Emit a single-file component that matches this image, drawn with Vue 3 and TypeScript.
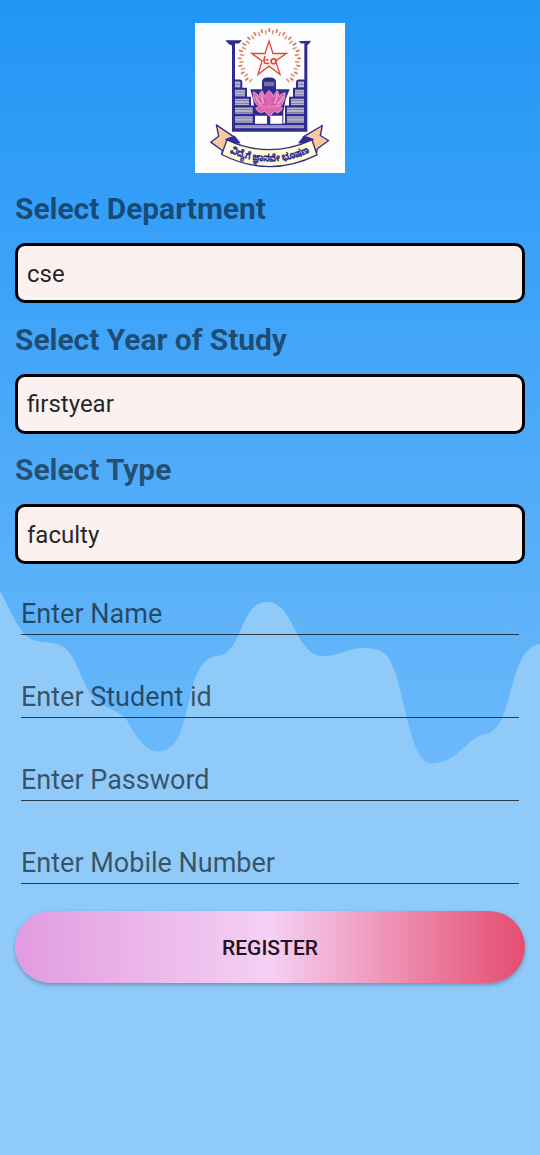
<script setup lang="ts">
import { ref } from 'vue'

interface Choice {
  id: string
  label: string
  value: string
}

interface Entry {
  id: string
  hint: string
  type: string
}

const choices = ref<Choice[]>([
  { id: 'department', label: 'Select Department', value: 'cse' },
  { id: 'year', label: 'Select Year of Study', value: 'firstyear' },
  { id: 'type', label: 'Select Type', value: 'faculty' },
])

const entries: Entry[] = [
  { id: 'name', hint: 'Enter Name', type: 'text' },
  { id: 'student', hint: 'Enter Student id', type: 'text' },
  { id: 'password', hint: 'Enter Password', type: 'password' },
  { id: 'mobile', hint: 'Enter Mobile Number', type: 'tel' },
]

// Rays of the dashed halo around the star, in degrees
const rays: number[] = Array.from({ length: 39 }, (_, i) => -138 + i * (276 / 38))
</script>

<template>
  <main class="page">
    <svg class="wave" viewBox="0 0 540 1155" aria-hidden="true">
      <path
        fill="#90caf9"
        d="M0 591C9 607 17 629 28 637C36 643 47 642 55 643.500C73 647 77 669 88 690C96 705 113 709 122 715C132 723 139 751 158 751.500C177 751 182 730 187 710C192 689 197 657 217 656C244 653 239 602 267 602C295 602 294 656 324 656C339 656 347 648 364 648C374 648 382 650 387 656C405 678 407 763 432 763.500C459 762 467 737 486 734C515 728 507 648 540 644V1155H0Z"
      />
    </svg>

    <svg class="logo" viewBox="15 13.5 450 450" role="img" aria-label="College emblem">
      <rect x="15" y="13" width="451" height="451" fill="#fdfdfd" />
      <g stroke-width="5">
        <g v-for="(a, i) in rays" :key="i" :transform="`translate(238 124) rotate(${a})`">
          <path v-if="i % 2" d="M0-95V-83" stroke="#d8705e" />
          <path v-else d="M0-90V-77" stroke="#e29a7c" />
        </g>
      </g>
      <path
        d="M237 68L249 105H289L257 127L270 168L237 143L204 168L216 127L185 105H225Z"
        fill="#fff8f5" stroke="#dc4a40" stroke-width="4"
      />
      <path d="M225 113q-7 19 2 22h11M227 124h8M251 121c-11 0-10 15 0 15c10 0 9-15 0-15" fill="none" stroke="#df4438" stroke-width="5" />

      <g fill="#b4b5c9" stroke="#302b91" stroke-width="6">
        <path d="M132 186H149Q154 186 154 193V210H132Z" />
        <path d="M132 211H168V237H132Z" />
        <path d="M132 238H180V263H132Z" />
        <path d="M132 264H191V289H132Z" />
        <path d="M132 290H191V316H132Z" />
        <path d="M345 186H326Q321 186 321 193V210H345Z" />
        <path d="M345 211H312V237H345Z" />
        <path d="M345 238H300V263H345Z" />
        <path d="M345 264H288V289H345Z" />
        <path d="M345 290H288V316H345Z" />
        <path d="M132 317H345V332H132Z" />
      </g>
      <path
        d="M134 198H152M134 220H166M134 229H166M134 246H178M134 255H178M134 273H189M134 282H189M134 299H189M134 308H189M134 325H343M324 198H343M315 220H343M315 229H343M303 246H343M303 255H343M290 273H343M290 282H343M290 299H343M290 308H343"
        stroke="#6a679c" stroke-width="2"
      />
      <path d="M106 65H156L147 75H135V331H343V75H334L325 68L363 67Q359 76 352 80V340H126V81Q115 78 106 65Z" fill="#302b91" />
      <path d="M181 212H216V188Q219 177 230 177H244Q257 178 258 190V212H299L287 242L281 275H194L189 242Z" fill="#302b91" />
      <path d="M222 190H253V203H222Z" fill="#77759f" />
      <path d="M192 271H280V316H192Z" fill="#302b91" />
      <path d="M195 292H231V316H195ZM241 292H277V316H241Z" fill="#fff" />
      <g fill="#e069ae" stroke="#f2b4d8" stroke-width="2">
        <path d="M190 220Q203 224 207 237Q207 220 217 217Q222 229 226 235Q227 222 237 216Q248 222 250 235Q254 223 262 216Q268 224 267 235Q271 224 286 222Q286 247 275 260L237 267L200 259Q188 245 190 220Z" />
        <path d="M197 269Q211 257 219 266Q231 257 238 267Q246 257 254 267Q268 257 278 269Q272 281 262 283L253 279L239 294L224 279L214 283Q202 281 197 269Z" />
      </g>
      <path d="M197 234Q204 252 216 257M216 226Q214 244 222 256M261 226Q262 244 253 256M280 234Q272 252 261 257" fill="none" stroke="#f3a9d5" stroke-width="4" />
      <path d="M207 237Q212 252 225 263M226 235Q220 250 231 264M250 235Q254 250 244 264M267 235Q264 252 250 263" fill="none" stroke="#b93f92" stroke-width="2" />

      <g stroke="#302b91" stroke-width="4" stroke-linejoin="round">
        <path d="M79 319L133 356L119 386L96 405L97 396L62 371L86 353Z" fill="#f8c99f" />
        <path d="M397 321L340 355L358 385L379 406L382 391L416 366L391 351Z" fill="#f8c99f" />
        <path d="M108 363L133 354L149 373L121 375ZM369 363L343 354L327 373L354 375Z" fill="#302b91" />
        <path d="M111 364Q237 423 366 364L381 409Q238 480 95 408Z" fill="#fffbd5" />
      </g>
      <path id="motto-curve" d="M111 399Q237 459 367 399" fill="none" />
      <text class="motto">
        <textPath href="#motto-curve" startOffset="50%" text-anchor="middle" textLength="248" lengthAdjust="spacingAndGlyphs">ವಿದ್ಯೆಗೆ ಜ್ಞಾನವೇ ಭೂಷಣ</textPath>
      </text>
    </svg>

    <form class="form" @submit.prevent>
      <div v-for="choice in choices" :key="choice.id" class="choice">
        <label class="label" :for="choice.id">{{ choice.label }}</label>
        <input :id="choice.id" v-model="choice.value" class="select" type="text" readonly />
      </div>
      <div class="entries">
        <input
          v-for="entry in entries"
          :key="entry.id"
          class="entry"
          :type="entry.type"
          :placeholder="entry.hint"
        />
      </div>
      <button class="register" type="submit">REGISTER</button>
    </form>
  </main>
</template>

<style>
body {
  margin: 0;
}
</style>

<style scoped>
.page {
  position: relative;
  box-sizing: border-box;
  width: 540px;
  height: 1155px;
  padding: 22.5px 15px 0;
  overflow: hidden;
  display: flex;
  flex-direction: column;
  align-items: center;
  background: linear-gradient(180deg, #2196f3 0, #359ff8 210px, #59b0f8 570px, #6bb9fb 765px);
  font-family: Roboto, "Noto Sans", sans-serif;
}

.wave {
  position: absolute;
  inset: 0;
  width: 100%;
  height: 100%;
}

.logo {
  position: relative;
  display: block;
  flex: none;
  width: 150px;
  height: 150px;
}

.motto {
  fill: #302b91;
  stroke: #302b91;
  stroke-width: 1px;
  font-family: "Noto Sans Kannada", "Noto Sans", sans-serif;
  font-size: 30px;
  font-weight: 700;
}

.form {
  position: relative;
  width: 100%;
  display: flex;
  flex-direction: column;
}

.choice {
  display: flex;
  flex-direction: column;
  gap: 14px;
  padding-top: 16.5px;
}

.label {
  font-size: 30px;
  line-height: 40px;
  font-weight: 700;
  letter-spacing: -0.05px;
  color: rgba(0, 0, 0, 0.54);
}

.select {
  box-sizing: border-box;
  width: 100%;
  height: 60px;
  padding: 1px 9px 0;
  border: 3px solid #000;
  border-radius: 10px;
  outline: none;
  background: #faf1f0;
  font-family: inherit;
  font-size: 24px;
  color: rgba(0, 0, 0, 0.87);
}

.entries {
  display: flex;
  flex-direction: column;
  gap: 38px;
  padding: 25.5px 6px 0;
}

.entry {
  box-sizing: border-box;
  width: 100%;
  height: 45px;
  padding: 4px 0 0;
  border: 0;
  border-bottom: 1px solid rgba(0, 0, 0, 0.7);
  outline: none;
  background: transparent;
  font-family: inherit;
  font-size: 27px;
}

.entry::placeholder {
  color: rgba(0, 0, 0, 0.6);
  opacity: 1;
}

.register {
  height: 72px;
  margin-top: 27px;
  padding: 2px 0 0;
  border: 0;
  border-radius: 36px;
  background: linear-gradient(90deg, #e19be0, #f5d0f4 50%, #e54c70);
  box-shadow: 0 2px 4px rgba(0, 0, 0, 0.28);
  font-family: inherit;
  font-size: 21px;
  font-weight: 500;
  color: #201323;
}
</style>
